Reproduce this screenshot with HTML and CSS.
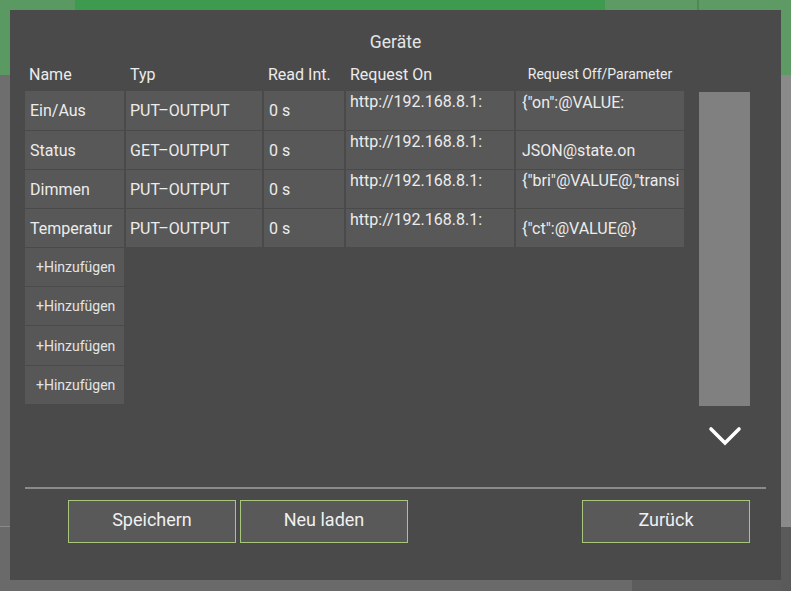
FILE: index.html
```html
<!DOCTYPE html>
<html lang="de">
<head>
<meta charset="utf-8">
<title>Geräte</title>
<link rel="stylesheet" href="styles.css">
</head>
<body>
<div class="dialog">
  <h1 class="title">Geräte</h1>
  <div class="main">
    <div class="table">
      <div class="th">Name</div>
      <div class="th">Typ</div>
      <div class="th">Read Int.</div>
      <div class="th">Request On</div>
      <div class="th th-small">Request Off/Parameter</div>

      <div class="cell c-name">Ein/Aus</div>
      <div class="cell c-typ">PUT–OUTPUT</div>
      <div class="cell c-read">0 s</div>
      <div class="cell c-on c-top">http://192.168.8.1:</div>
      <div class="cell c-off c-top2">{"on":@VALUE:</div>

      <div class="cell c-name">Status</div>
      <div class="cell c-typ">GET–OUTPUT</div>
      <div class="cell c-read">0 s</div>
      <div class="cell c-on c-top">http://192.168.8.1:</div>
      <div class="cell c-off">JSON@state.on</div>

      <div class="cell c-name">Dimmen</div>
      <div class="cell c-typ">PUT–OUTPUT</div>
      <div class="cell c-read">0 s</div>
      <div class="cell c-on c-top">http://192.168.8.1:</div>
      <div class="cell c-off c-top">{"bri"@VALUE@,"transi</div>

      <div class="cell c-name">Temperatur</div>
      <div class="cell c-typ">PUT–OUTPUT</div>
      <div class="cell c-read">0 s</div>
      <div class="cell c-on c-top">http://192.168.8.1:</div>
      <div class="cell c-off">{"ct":@VALUE@}</div>

      <div class="add">+Hinzufügen</div>
      <div class="add">+Hinzufügen</div>
      <div class="add">+Hinzufügen</div>
      <div class="add">+Hinzufügen</div>
    </div>
    <div class="scroll">
      <div class="track"></div>
      <svg class="chevron" width="36" height="22" viewBox="0 0 36 22">
        <polyline points="4,4 18,18 32,4" fill="none" stroke="#ffffff" stroke-width="3.6" stroke-linecap="round" stroke-linejoin="miter"/>
      </svg>
    </div>
  </div>
  <div class="sep"></div>
  <div class="actions">
    <button class="btn">Speichern</button>
    <button class="btn">Neu laden</button>
    <button class="btn btn-right">Zurück</button>
  </div>
</div>
</body>
</html>
```
FILE: styles.css
```css
html, body {
  margin: 0;
  width: 791px;
  height: 591px;
  overflow: hidden;
}

body {
  font-family: Roboto, "Liberation Sans", sans-serif;
  background-color: #6a6a6a;
  background-image:
    linear-gradient(to right, #5a9962 0 75px, #3e9a4e 75px 605px, #5e9b64 605px 697px, #4f8a56 697px 699px, #5e9b64 699px),
    linear-gradient(to bottom, #5a9962 0 75px, #6e6e6e 75px 526px, #8a8a8a 526px 527px, #6a6a6a 527px),
    linear-gradient(to bottom, #5e9b64 0 75px, #8a8a8a 75px 527px, #5a5a5a 527px),
    linear-gradient(to right, #6a6a6a 0 632px, #5c5c5c 632px);
  background-size: 100% 10px, 10px 100%, 10px 100%, 100% 11px;
  background-position: 0 0, 0 0, right 0 top 0, 0 bottom;
  background-repeat: no-repeat;
  padding: 10px;
  box-sizing: border-box;
}

.dialog {
  width: 771px;
  height: 570px;
  box-sizing: border-box;
  background: #4a4a4a;
  padding: 23px 15px 0 15px;
  color: #ececec;
}

.title {
  margin: 0 0 12px 0;
  font-size: 17.5px;
  line-height: 19px;
  padding-bottom: 1px;
  font-weight: 400;
  text-align: center;
  color: #e6e6e6;
}

.main {
  display: flex;
  height: 422px;
}

.table {
  display: grid;
  grid-template-columns: 99px 136px 80px 168px 168px;
  grid-template-rows: 25px 39px 38px 38px 38px 38px 38px 39px 38px;
  column-gap: 2px;
  row-gap: 1px;
  align-content: start;
  font-size: 16px;
}

.th {
  line-height: 19px;
  padding-left: 4px;
  white-space: nowrap;
}

.th-small {
  font-size: 14px;
  text-align: center;
  padding-left: 0;
  line-height: 19px;
}

.cell {
  background: #585858;
  padding-left: 5px;
  display: flex;
  align-items: center;
  white-space: nowrap;
  overflow: hidden;
  line-height: 19px;
}

.c-typ {
  padding-left: 4px;
}

.c-on {
  padding-left: 4px;
}

.c-top {
  align-items: flex-start;
  padding-top: 1px;
}

.c-off {
  padding-left: 6px;
}

.c-top2 {
  align-items: flex-start;
  padding-top: 2px;
}

.add {
  grid-column: 1;
  background: #575757;
  font-size: 14px;
  display: flex;
  align-items: center;
  padding-left: 11px;
  color: #e4e4e4;
}

.scroll {
  margin-left: 15px;
  width: 51px;
  padding-top: 27px;
  display: flex;
  flex-direction: column;
  align-items: center;
}

.track {
  width: 51px;
  height: 314px;
  background: #808080;
}

.chevron {
  margin-top: 19px;
  display: block;
}

.sep {
  height: 2px;
  background: #8b8b8b;
}

.actions {
  display: flex;
  gap: 4px;
  margin-top: 11px;
  padding-left: 43px;
  padding-right: 16px;
}

.btn {
  width: 168px;
  height: 43px;
  box-sizing: border-box;
  background: #595959;
  border: 1px solid #a9c77b;
  color: #f0f0f0;
  font-family: Roboto, "Liberation Sans", sans-serif;
  font-size: 18px;
  line-height: 21px;
  padding: 0 0 4px 0;
  margin: 0;
}

.btn-right {
  margin-left: auto;
}
```
